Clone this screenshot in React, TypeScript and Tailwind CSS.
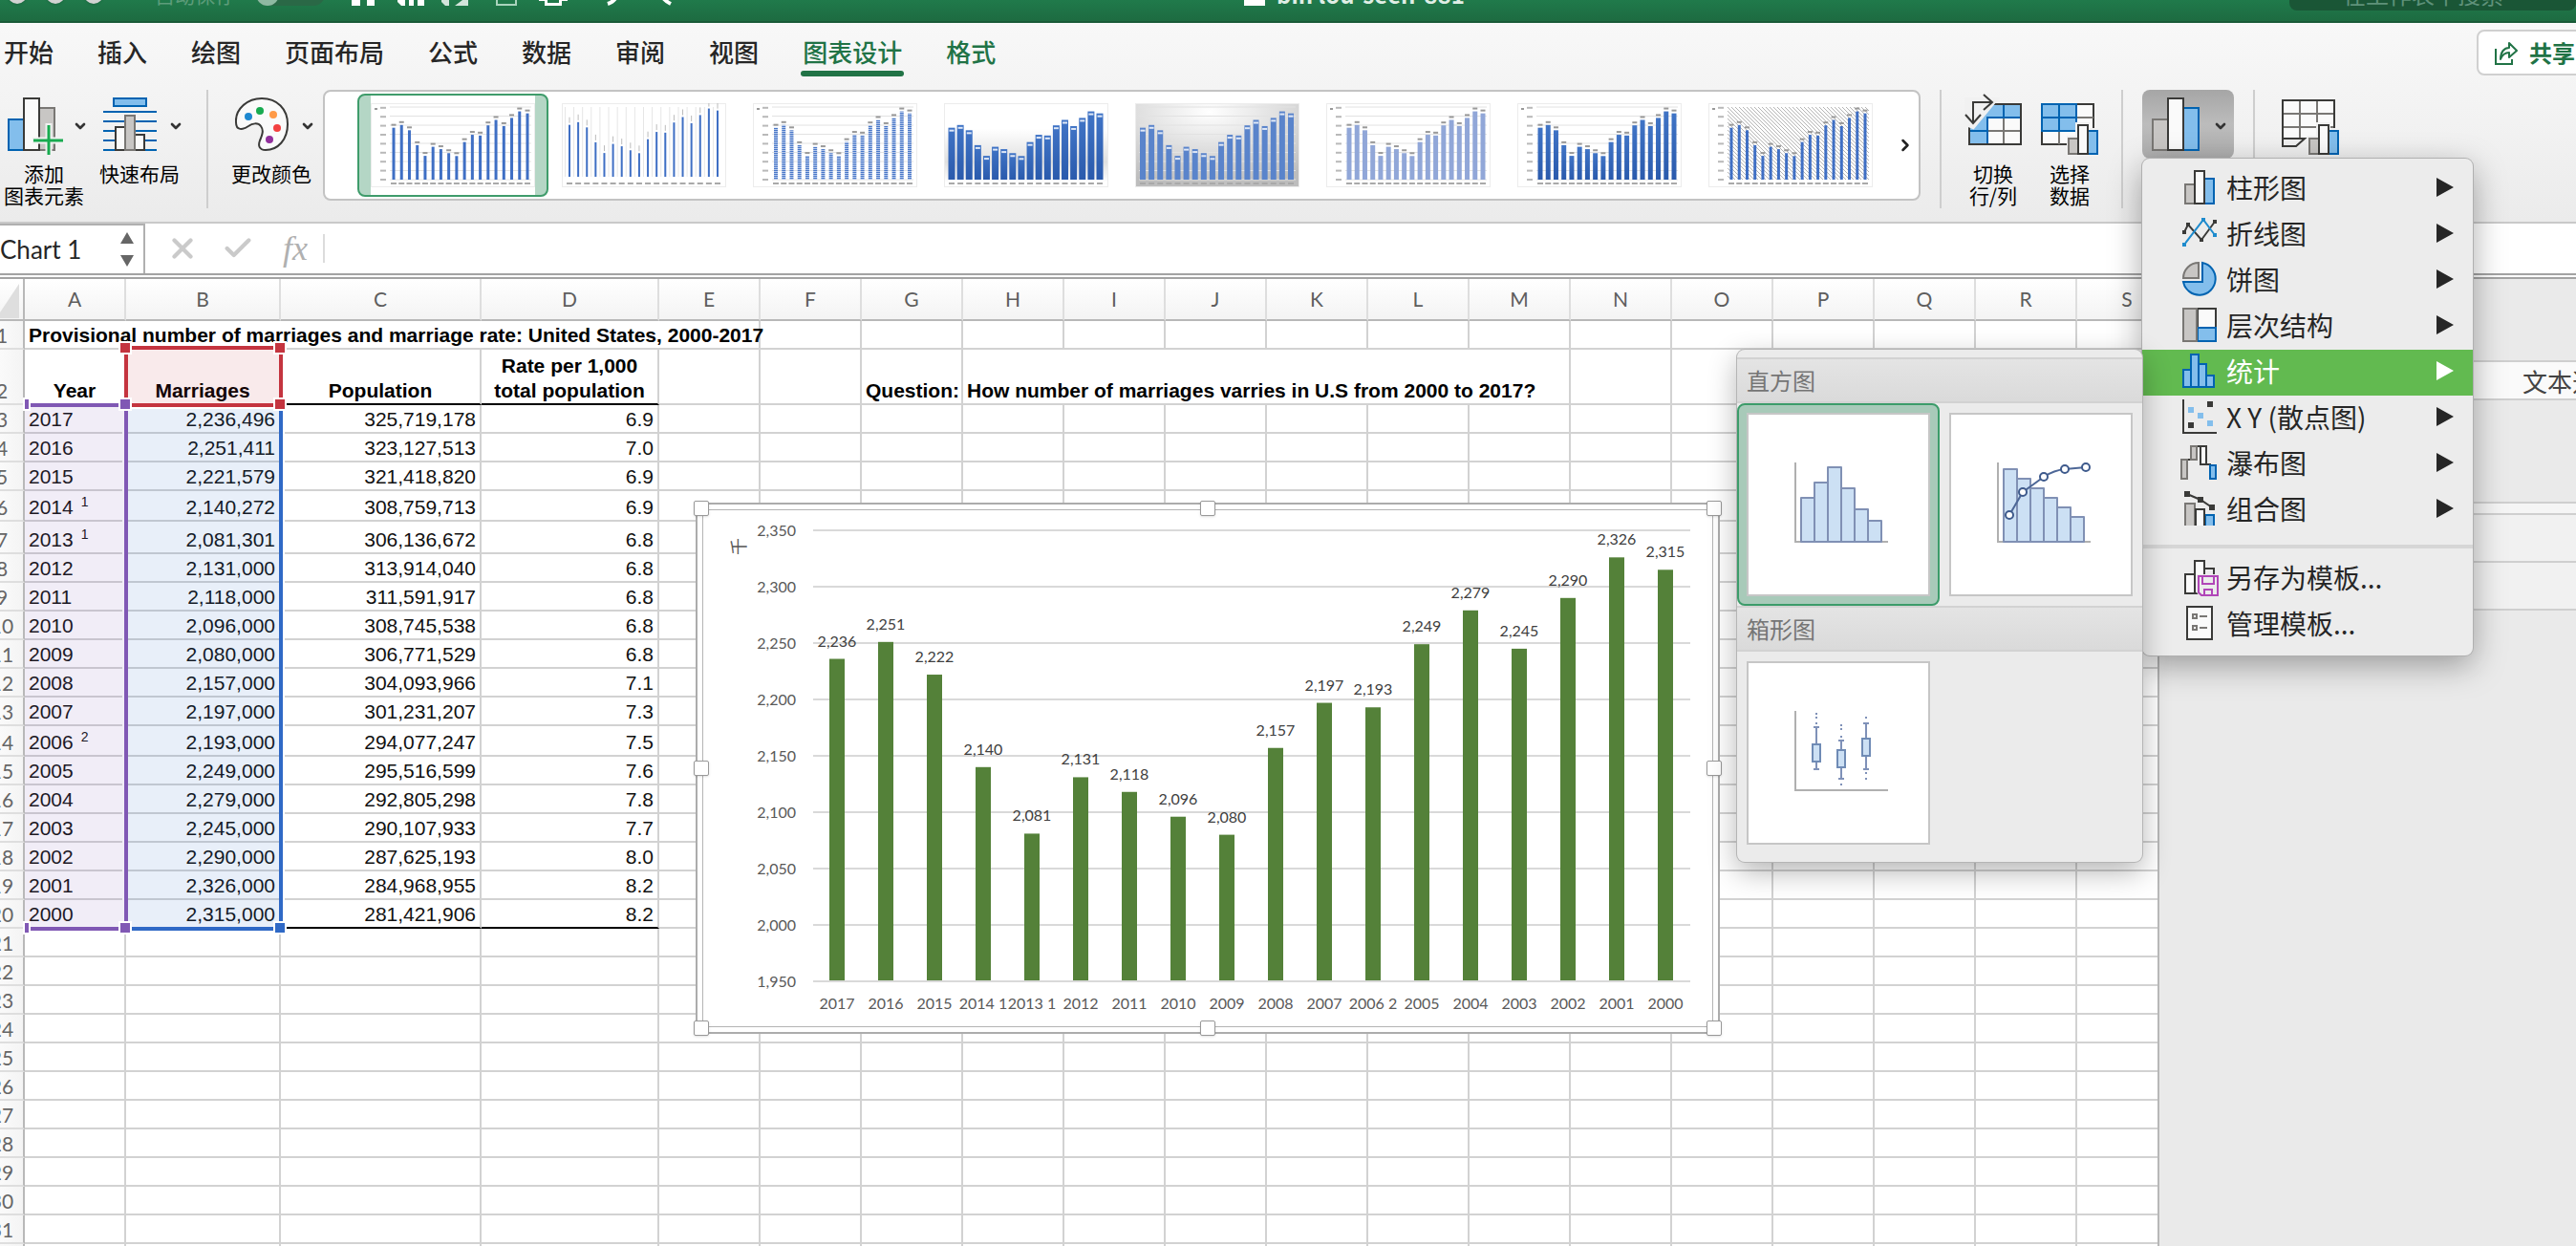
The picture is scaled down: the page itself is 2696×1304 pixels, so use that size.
/**
 * App.tsx
 *
 * Spreadsheet window: ribbon with the chart design tab, worksheet grid,
 * embedded bar chart and the open "change chart type" menu.
 */

import { ReactNode } from "react";
import { Check, ChevronDown, ChevronRight, X } from "lucide-react";

const tabs = ["开始", "插入", "绘图", "页面布局", "公式", "数据", "审阅", "视图", "图表设计", "格式"];

const columns = ["A", "B", "C", "D", "E", "F", "G", "H", "I", "J", "K", "L", "M", "N", "O", "P", "Q", "R", "S"];

interface Row {
  year: string;
  note?: string;
  marriages: number;
  population: string;
  rate: string;
}

const rows: Row[] = [
  { year: "2017", marriages: 2236496, population: "325,719,178", rate: "6.9" },
  { year: "2016", marriages: 2251411, population: "323,127,513", rate: "7.0" },
  { year: "2015", marriages: 2221579, population: "321,418,820", rate: "6.9" },
  { year: "2014", note: "1", marriages: 2140272, population: "308,759,713", rate: "6.9" },
  { year: "2013", note: "1", marriages: 2081301, population: "306,136,672", rate: "6.8" },
  { year: "2012", marriages: 2131000, population: "313,914,040", rate: "6.8" },
  { year: "2011", marriages: 2118000, population: "311,591,917", rate: "6.8" },
  { year: "2010", marriages: 2096000, population: "308,745,538", rate: "6.8" },
  { year: "2009", marriages: 2080000, population: "306,771,529", rate: "6.8" },
  { year: "2008", marriages: 2157000, population: "304,093,966", rate: "7.1" },
  { year: "2007", marriages: 2197000, population: "301,231,207", rate: "7.3" },
  { year: "2006", note: "2", marriages: 2193000, population: "294,077,247", rate: "7.5" },
  { year: "2005", marriages: 2249000, population: "295,516,599", rate: "7.6" },
  { year: "2004", marriages: 2279000, population: "292,805,298", rate: "7.8" },
  { year: "2003", marriages: 2245000, population: "290,107,933", rate: "7.7" },
  { year: "2002", marriages: 2290000, population: "287,625,193", rate: "8.0" },
  { year: "2001", marriages: 2326000, population: "284,968,955", rate: "8.2" },
  { year: "2000", marriages: 2315000, population: "281,421,906", rate: "8.2" },
];

const values = rows.map((r) => Math.round(r.marriages / 1000));

/* ---------- title bar ---------- */

function TitleBar() {
  return (
    <header className="h-6 shrink-0 overflow-hidden border-b-2 border-[#195a37] bg-linear-to-b from-[#207a4b] to-[#1d6b41]">
      <div className="-mt-6 flex h-9 items-center">
        <div className="flex flex-1 items-center">
          <div className="ml-2 flex gap-5">
            <span className="size-5 rounded-full bg-[#d2d2d2] shadow" />
            <span className="size-5 rounded-full bg-[#d2d2d2] shadow" />
            <span className="size-5 rounded-full bg-[#d2d2d2] shadow" />
          </div>
          <span className="ml-[54px] text-[21px] leading-6 text-[#5d9c7a]">自动保存</span>
          <span className="ml-[22px] flex h-6 w-[72px] rounded-full bg-[#2a6846]">
            <span className="size-6 rounded-full bg-[#8fb9a2]" />
          </span>
          <svg className="ml-6 h-6 w-[400px]" viewBox="0 0 400 24" fill="#fff">
            <path d="M4 10 16 0 28 10V24H20V16H13V24H4Z" />
            <path d="M52 0H80V24H56L52 20ZM60 14V24H64V14ZM69 14V24H73V14Z" fillRule="evenodd" />
            <path d="M98 0H126V24H102L98 20ZM106 14V24H112L120 18V14Z" fillRule="evenodd" opacity=".8" />
            <path d="M156 2H176V23H156Z" fill="none" stroke="#a9d3bc" strokeWidth="2" />
            <path d="M200 8H230V19H224V24H206V19H200ZM209 14V21H221V14Z" fillRule="evenodd" />
            <path d="M272 22Q284 18 282 4" fill="none" stroke="#fff" strokeWidth="4" />
            <path d="M326 4Q326 16 338 22" fill="none" stroke="#fff" strokeWidth="4" />
          </svg>
        </div>
        <svg className="mr-3 h-6 w-[22px]" viewBox="0 0 22 24">
          <path d="M0 0H22V24H0Z" fill="#fff" />
        </svg>
        <span className="w-[200px] text-2xl font-bold whitespace-nowrap text-[#dfeee5]">bin lou-seen-881</span>
        <div className="flex w-[1160px] justify-end">
          <div className="flex h-[34px] w-[300px] items-center rounded-lg bg-[#1a5636] pl-14 text-2xl text-[#5f917a]">
            在工作表中搜索
          </div>
        </div>
      </div>
    </header>
  );
}

/* ---------- ribbon icons ---------- */

function SmallBars() {
  return (
    <g strokeWidth="2">
      <path d="M27 62V40H36V26H51V32H61V62Z" fill="#f1f1f1" />
      <path d="M29 43H39V59H29Z" fill="#c8c6c4" stroke="#797774" />
      <path d="M49 35H59V59H49Z" fill="#83beec" stroke="#0063b1" />
      <path d="M39 29H49V59H39Z" fill="#fafafa" stroke="#3a3a38" />
    </g>
  );
}

function AddElementIcon() {
  return (
    <svg className="size-[60px] overflow-visible" viewBox="0 0 60 60" strokeWidth="2">
      <path d="M1 23H17V55H1Z" fill="#83beec" stroke="#0063b1" />
      <path d="M33 11H49V55H33Z" fill="#c8c6c4" stroke="#797774" />
      <path d="M17 1H33V55H17Z" fill="#fafafa" stroke="#3a3a38" />
      <path d="M43 27V60M26 45H58" stroke="#f1f1f1" strokeWidth="7" />
      <path d="M43 29V60M27 45H58" stroke="#18ab50" strokeWidth="3" />
    </svg>
  );
}

function QuickLayoutIcon() {
  return (
    <svg className="size-[60px]" viewBox="0 0 60 60" strokeWidth="2">
      <path d="M11 1H45V9H11Z" fill="#83beec" stroke="#0063b1" />
      <path d="M0 15H56M0 25H56M0 35H56M0 45H56M0 55H56" stroke="#0063b1" />
      <path d="M13 31H23V55H13ZM33 39H43V55H33Z" fill="#fafafa" stroke="#3a3a38" />
      <path d="M23 19H33V55H23Z" fill="#c8c6c4" stroke="#797774" />
    </svg>
  );
}

function PaletteIcon() {
  return (
    <svg className="size-[60px]" viewBox="0 0 60 60">
      <path
        d="M1 26C0 12 13 1 28 1C44 1 55 12 55 28C55 44 45 55 32 55C25 55 24 50 26 45C29 38 30 34 27 30C24 26 18 27 14 30C8 34 1 35 1 26Z"
        fill="#fafafa"
        stroke="#3a3a38"
        strokeWidth="2"
      />
      <circle cx="14" cy="20" r="4" fill="#1e88d0" />
      <circle cx="26" cy="14" r="4" fill="#18ab50" />
      <circle cx="40" cy="18" r="4" fill="#ff9a47" />
      <circle cx="44" cy="32" r="4" fill="#f34040" />
      <circle cx="36" cy="44" r="4" fill="#912f9c" />
    </svg>
  );
}

function SwitchIcon() {
  return (
    <svg className="size-[60px] overflow-visible" viewBox="0 0 60 60" strokeWidth="2" fill="none">
      <path d="M5 7H59V49H5Z" fill="#fafafa" stroke="#3a3a38" />
      <path d="M5 7H59V21H24V49H5Z" fill="#83beec" />
      <path d="M41 21V49M24 35H59" stroke="#797774" />
      <path d="M41 7V21M24 49V21H59M5 35H24" stroke="#0063b1" />
      <path d="M5 7H59V49H5Z" stroke="#3a3a38" />
      <path d="M2 2H33L9 31L2 28Z" fill="#f1f1f1" stroke="#f1f1f1" strokeWidth="4" />
      <path d="M9 26V5H28M20 -3 29 5 20 13M1 18 9 27 17 18" stroke="#3a3a38" />
    </svg>
  );
}

function SelectDataIcon() {
  return (
    <svg className="size-[60px] overflow-visible" viewBox="0 0 60 60" strokeWidth="2" fill="none">
      <path d="M1 7H55V49H1Z" fill="#fafafa" stroke="#3a3a38" />
      <path d="M19 35V49M38 21H55" stroke="#797774" />
      <path d="M1 7H37V35H1ZM19 7V35M1 21H37" fill="#83beec" stroke="#0063b1" />
      <SmallBars />
    </svg>
  );
}

function MoveChartIcon() {
  return (
    <svg className="size-[60px] overflow-visible" viewBox="0 0 60 60" strokeWidth="2" fill="none">
      <path d="M1 3H55V43H1Z" fill="#fafafa" />
      <path d="M19 3V43M37 3V43M1 17H55M1 31H55" stroke="#797774" />
      <path d="M55 43V3H1V51H15L24 43H1" stroke="#3a3a38" />
      <SmallBars />
    </svg>
  );
}

function ColumnChartIcon() {
  return (
    <svg className="size-[60px]" viewBox="0 0 60 60" strokeWidth="2">
      <path d="M1 23H17V55H1Z" fill="#c8c6c4" stroke="#797774" />
      <path d="M33 11H49V55H33Z" fill="#83beec" stroke="#0063b1" />
      <path d="M17 1H33V55H17Z" fill="#fafafa" stroke="#3a3a38" />
    </svg>
  );
}

interface RibbonButtonProps {
  icon: ReactNode;
  lines: string[];
  menu?: boolean;
}

function RibbonButton({ icon, lines, menu = false }: RibbonButtonProps) {
  return (
    <button className="flex flex-col items-start pt-2 text-[21px] leading-[23px] text-black">
      <span className={`flex items-center gap-2 ${menu ? "pl-1" : ""}`}>
        {icon}
        {menu && <ChevronDown className="size-4 text-[#333]" strokeWidth={4} />}
      </span>
      <span className={`mt-2 block text-center ${menu ? "w-[84px]" : "w-[60px]"}`}>
        {lines.map((line) => (
          <span key={line} className="block">{line}</span>
        ))}
      </span>
    </button>
  );
}

/* ---------- chart style gallery ---------- */

interface ChartStyle {
  bar: string;
  width: number;
  wide?: boolean;
  grid?: "h" | "v" | "none" | "hatch";
  back?: string;
  inside?: boolean;
}

const chartStyles: ChartStyle[] = [
  { bar: "#3f6fc4", width: 3 },
  { bar: "#3f6fc4", width: 2, wide: true, grid: "v" },
  { bar: "url(#stripes)", width: 4 },
  { bar: "url(#deep)", width: 7, wide: true, grid: "none", back: "url(#fade)", inside: true },
  { bar: "#5a84cb", width: 6, wide: true, back: "url(#spot)", inside: true },
  { bar: "#91a7d8", width: 5 },
  { bar: "url(#deep)", width: 5 },
  { bar: "#3f6fc4", width: 3, grid: "hatch" },
];

function StyleThumb({ bar, width, wide = false, grid = "h", back = "#fff", inside = false }: ChartStyle) {
  const start = wide ? 8 : 24;
  const step = wide ? 155 / 17 : 140 / 17;
  const base = wide && grid === "v" ? 77 : 80;
  return (
    <svg className="h-[88px] w-[172px]" viewBox="0 0 172 88">
      <rect x="0.5" y="0.5" width="171" height="87" fill={back} stroke="#ececec" />
      {grid === "hatch" && <rect x="20" y="4" width="148" height="76" fill="url(#hatch)" />}
      {grid === "h" &&
        [0, 1, 2, 3, 4, 5, 6, 7, 8].map((i) => (
          <path key={i} d={`M${wide ? 4 : 20} ${80 - i * 9.5}H168`} stroke="#e2e2e2" />
        ))}
      {!wide &&
        [0, 1, 2, 3, 4, 5, 6, 7, 8].map((i) => (
          <rect key={i} x="10" y={79 - i * 9.4} width="6" height="2" fill="#b9b9b9" />
        ))}
      {!wide && <rect x="4" y="5" width="3" height="2" fill="#999" />}
      {values.map((v, i) => {
        const x = start + i * step;
        const h = ((v - 1950) / 400) * 76;
        return (
          <g key={i}>
            {grid === "v" && <path d={`M${x - step / 2} 4V77`} stroke="#e6e6e6" />}
            <rect x={x - width / 2} y={base - h} width={width} height={h} fill={bar} />
            {grid === "v" ? (
              <rect x={x - 0.5} y={base - h - 8} width="1" height="6" fill="#bbb" />
            ) : (
              <rect x={x - 2.5} y={inside ? base - h + 2 : base - h - 4} width="5" height="2" fill={inside ? "#dfe8f7" : "#999"} />
            )}
            <rect x={x - 3} y="83" width="6" height="2" fill="#a9a9a9" />
          </g>
        );
      })}
    </svg>
  );
}

function ThumbDefs() {
  return (
    <svg className="absolute size-0" aria-hidden="true">
      <defs>
        <pattern id="stripes" width="4" height="2" patternUnits="userSpaceOnUse">
          <rect width="4" height="2" fill="#b4c7ea" />
          <rect width="4" height="1" fill="#4a78c8" />
        </pattern>
        <pattern id="hatch" width="4" height="4" patternUnits="userSpaceOnUse">
          <path d="M0 0L4 4" stroke="#b5b5b5" strokeWidth="1" />
        </pattern>
        <linearGradient id="deep" x1="0" y1="0" x2="0" y2="1">
          <stop offset="0" stopColor="#4074c6" />
          <stop offset="1" stopColor="#2a5aac" />
        </linearGradient>
        <linearGradient id="fade" x1="0" y1="0" x2="0" y2="1">
          <stop offset="0.3" stopColor="#fff" />
          <stop offset="0.7" stopColor="#e0e0e0" />
          <stop offset="0.95" stopColor="#fff" />
        </linearGradient>
        <radialGradient id="spot" cx="0.45" cy="0.1" r="0.9">
          <stop offset="0" stopColor="#fff" />
          <stop offset="1" stopColor="#bdbdbd" />
        </radialGradient>
      </defs>
    </svg>
  );
}

function Gallery() {
  return (
    <div className="flex h-[116px] min-w-0 flex-1 items-center rounded-lg border-2 border-[#c3c3c3] bg-white pl-[34px]">
      <ThumbDefs />
      {chartStyles.map((style, i) => (
        <button
          key={i}
          aria-label={`样式 ${i + 1}`}
          className={`flex h-[108px] w-[200px] shrink-0 items-center justify-center rounded-lg ${
            i === 0 ? "border-2 border-[#3f9c6b] bg-[#b4d6c5]" : ""
          }`}
        >
          <span className="bg-white py-2">
            <StyleThumb {...style} />
          </span>
        </button>
      ))}
      <button aria-label="更多样式" className="mr-1 ml-auto">
        <ChevronRight className="size-5 text-[#222]" strokeWidth={3} />
      </button>
    </div>
  );
}

/* ---------- chart type menu ---------- */

const menuItems: { label: string; icon: ReactNode }[] = [
  {
    label: "柱形图",
    icon: (
      <>
        <path d="M3 15H13V35H3Z" fill="#c8c6c4" stroke="#797774" />
        <path d="M23 9H33V35H23Z" fill="#83beec" stroke="#0063b1" />
        <path d="M13 1H23V35H13Z" fill="#fafafa" stroke="#3a3a38" />
      </>
    ),
  },
  {
    label: "折线图",
    icon: (
      <>
        <path d="M2 17 6 9 20 25 34 6" fill="none" stroke="#3a3a38" />
        <path d="M2 30 22 4 34 20" fill="none" stroke="#1e8bcd" />
        <path d="M0 15H4V19H0ZM4 7H8V11H4ZM18 23H22V27H18ZM32 4H36V8H32Z" fill="#3a3a38" />
        <path d="M0 28H4V32H0ZM20 2H24V6H20ZM32 18H36V22H32Z" fill="#1e8bcd" />
      </>
    ),
  },
  {
    label: "饼图",
    icon: (
      <>
        <path d="M21 1A17 17 0 1 1 1 21H21Z" fill="#83beec" stroke="#0063b1" />
        <path d="M17 1V17H1A16 16 0 0 1 17 1Z" fill="#c8c6c4" stroke="#797774" />
      </>
    ),
  },
  {
    label: "层次结构",
    icon: (
      <>
        <path d="M16 1H35V21H16Z" fill="#fafafa" stroke="#3a3a38" />
        <path d="M16 21H35V35H16Z" fill="#83beec" stroke="#0063b1" />
        <path d="M1 1H15V35H1Z" fill="#c8c6c4" stroke="#797774" />
      </>
    ),
  },
  {
    label: "统计",
    icon: <path d="M1 17H9V35H1ZM9 1H17V35H9ZM17 11H25V35H17ZM25 23H33V35H25Z" fill="#83beec" stroke="#0063b1" />,
  },
  {
    label: "X Y (散点图)",
    icon: (
      <>
        <path d="M1 0V35H36" fill="none" stroke="#3a3a38" />
        <path d="M6 8H12V14H6ZM16 14H22V20H16ZM26 22H32V28H26Z" fill="#83beec" />
        <path d="M26 2H32V8H26ZM6 24H12V30H6Z" fill="#3a3a38" />
      </>
    ),
  },
  {
    label: "瀑布图",
    icon: (
      <>
        <path d="M5 15H10M15 1H19M25 20H30" stroke="#3a3a38" />
        <path d="M-1 15H5V35H-1ZM9 1H15V15H9Z" fill="#c8c6c4" stroke="#797774" />
        <path d="M19 1H25V20H19Z" fill="#fafafa" stroke="#3a3a38" />
        <path d="M29 21H35V35H29Z" fill="#83beec" stroke="#0063b1" />
      </>
    ),
  },
  {
    label: "组合图",
    icon: (
      <>
        <path d="M3 36V13H13V36" fill="#c8c6c4" stroke="#797774" />
        <path d="M24 36V25H33V36" fill="#83beec" stroke="#0063b1" />
        <path d="M14 36V19H23V36" fill="#fafafa" stroke="#3a3a38" />
        <path d="M5 3 19 9 31 17" fill="none" stroke="#3a3a38" />
        <path d="M2 0H8V6H2ZM16 6H22V12H16ZM28 14H34V20H28Z" fill="#3a3a38" />
      </>
    ),
  },
];

const templateItems: { label: string; icon: ReactNode }[] = [
  {
    label: "另存为模板...",
    icon: (
      <>
        <path d="M3 15H13V35H3ZM13 1H23V35H13Z" fill="#fafafa" stroke="#3a3a38" />
        <path d="M23 9H33V15" fill="none" stroke="#3a3a38" />
        <path d="M15 15H38V38H18L15 34Z" fill="#ececec" />
        <path d="M17 17H37V37H20L17 34ZM21 17V25H33V17M23 37V31H31V37" fill="none" stroke="#b146b8" />
      </>
    ),
  },
  {
    label: "管理模板...",
    icon: (
      <>
        <path d="M5 1H31V35H5Z" fill="#fafafa" stroke="#3a3a38" />
        <path d="M11 9H15V13H11ZM11 21H15V25H11Z" fill="none" stroke="#797774" />
        <path d="M18 11H26M18 23H26" stroke="#797774" />
      </>
    ),
  },
];

interface MenuItemProps {
  label: string;
  icon: ReactNode;
  active?: boolean;
  arrow?: boolean;
}

function MenuItem({ label, icon, active = false, arrow = false }: MenuItemProps) {
  return (
    <button
      role="menuitem"
      className={`flex h-12 w-full items-center pr-5 pb-1 pl-[42px] text-[28px] whitespace-nowrap ${
        active ? "bg-[#62ba50] text-white" : "text-[#262626]"
      }`}
    >
      <svg className="mr-[10px] size-9 shrink-0 overflow-visible" viewBox="0 0 36 36" strokeWidth="2">
        {icon}
      </svg>
      {label}
      {arrow && (
        <svg className="ml-auto h-5 w-[18px]" viewBox="0 0 18 20" fill="currentColor">
          <path d="M0 0 18 10 0 20Z" />
        </svg>
      )}
    </button>
  );
}

function SectionTitle({ children }: { children: ReactNode }) {
  return (
    <h3 className="flex h-12 items-center border-y-2 border-[#d2d2d2] bg-linear-to-b from-[#e4e4e4] to-[#dadada] pl-[10px] text-2xl text-[#757575]">
      {children}
    </h3>
  );
}

function ChartTile({ label, selected = false, children }: { label: string; selected?: boolean; children: ReactNode }) {
  return (
    <button
      aria-label={label}
      className={`flex size-[212px] items-center justify-center rounded-lg ${
        selected ? "border-2 border-[#3c9c6a] bg-[#a8cab9]" : ""
      }`}
    >
      <svg className="size-48 shrink-0 border-2 border-[#c6c6c6] bg-white" viewBox="2 2 188 188" strokeWidth="2" fill="none">
        <path d="M51 52V135H148" stroke="#b0b0b0" />
        {children}
      </svg>
    </button>
  );
}

interface WhiskerProps {
  x: number;
  top: number;
  high: number;
  low: number;
  bottom: number;
  dots: number[];
}

function Whisker({ x, top, high, low, bottom, dots }: WhiskerProps) {
  return (
    <g stroke="#7f91b8">
      <path d={`M${x - 3} ${top}H${x + 3}M${x} ${top}V${bottom}M${x - 3} ${bottom}H${x + 3}`} />
      <path d={`M${x - 4} ${high}H${x + 4}V${low}H${x - 4}Z`} fill="#cce0f4" stroke="#6f8bb5" />
      {dots.map((y) => (
        <path key={y} d={`M${x - 1} ${y}H${x + 1}`} />
      ))}
    </g>
  );
}

const paretoPoints = [[63, 107], [77, 83], [99, 67], [121, 59], [143, 57]];

/* Opens to the left of the menu, level with the active item */
function StatisticsSubmenu() {
  return (
    <div
      role="menu"
      className="absolute top-[200px] right-full w-[424px] overflow-hidden rounded-lg bg-[#ebebeb] py-2 shadow-[0_10px_30px_rgba(0,0,0,0.3)] ring-1 ring-[#b5b5b5]"
    >
      <SectionTitle>直方图</SectionTitle>
      <div className="flex">
        <ChartTile label="直方图" selected>
          <path
            d="M57 89H71V135H57ZM71 73H85V135H71ZM85 57H99V135H85ZM99 79H113V135H99ZM113 101H127V135H113ZM127 113H141V135H127Z"
            fill="#cce0f4"
            stroke="#8090b4"
            strokeLinejoin="round"
          />
        </ChartTile>
        <ChartTile label="排列图">
          <path
            d="M57 59H71V135H57ZM71 69H85V135H71ZM85 79H99V135H85ZM99 89H113V135H99ZM113 99H127V135H113ZM127 109H141V135H127Z"
            fill="#cce0f4"
            stroke="#8090b4"
            strokeLinejoin="round"
          />
          <path d="M63 107 77 83 99 67Q110 60 121 59L143 57" stroke="#4d6797" />
          {paretoPoints.map(([x, y]) => (
            <circle key={x} cx={x} cy={y} r="4" fill="#fff" stroke="#3e5a8c" />
          ))}
        </ChartTile>
      </div>
      <SectionTitle>箱形图</SectionTitle>
      <ChartTile label="箱形图">
        <Whisker x={73} top={69} high={87} low={105} bottom={113} dots={[55, 59, 65]} />
        <Whisker x={99} top={83} high={93} low={111} bottom={123} dots={[67, 71, 79, 129]} />
        <Whisker x={125} top={65} high={81} low={99} bottom={113} dots={[59, 117, 123]} />
      </ChartTile>
    </div>
  );
}

function ChartTypeMenu() {
  return (
    <div className="relative z-20 self-start">
      <button
        aria-label="更改图表类型"
        className="flex h-[72px] w-24 items-start rounded-lg bg-linear-to-b from-[#a6a6a6] via-[#bcbcbc] to-[#adadad] pt-2 pl-[10px]"
      >
        <ColumnChartIcon />
        <ChevronDown className="mt-[22px] ml-1 size-4 shrink-0 text-[#333]" strokeWidth={4} />
      </button>
      <div
        role="menu"
        className="absolute top-full left-0 w-[346px] rounded-lg bg-[#ececec] py-2 shadow-[0_10px_34px_rgba(0,0,0,0.35)] ring-1 ring-[#b0b0b0]"
      >
        {menuItems.map((item) => (
          <MenuItem key={item.label} {...item} arrow active={item.label === "统计"} />
        ))}
        <div className="mt-3 mb-2 h-1 bg-[#d6d6d6]" />
        {templateItems.map((item) => (
          <MenuItem key={item.label} {...item} />
        ))}
        <StatisticsSubmenu />
      </div>
    </div>
  );
}

function Divider() {
  return <span className="h-[124px] w-[2px] shrink-0 bg-[#cecece]" />;
}

function Ribbon() {
  return (
    <div className="shrink-0 border-b-2 border-[#c9c9c9] bg-linear-to-b from-[#f8f8f8] via-[#f2f2f2] to-[#ebebeb]">
      <nav className="flex h-[62px] items-center">
        <div className="flex h-full flex-1 gap-[46px] pl-1">
          {tabs.map((tab) => (
            <button
              key={tab}
              className={`relative pb-[3px] text-[26px] font-medium whitespace-nowrap ${
                tab === "图表设计" || tab === "格式" ? "text-[#217346]" : "text-[#262626]"
              }`}
            >
              {tab}
              {tab === "图表设计" && (
                <span className="absolute -inset-x-[2px] bottom-[6px] h-[6px] rounded-full bg-[#217346]" />
              )}
            </button>
          ))}
        </div>
        <button className="-mr-2 flex h-12 w-28 items-center gap-3 rounded-lg border-2 border-[#d0d0d0] bg-white pl-4 text-2xl font-bold whitespace-nowrap text-[#217346]">
          <svg className="size-[25px] shrink-0" viewBox="0 0 25 25" fill="none" stroke="#217346" strokeWidth="2">
            <path d="M2 8V24H19V19" />
            <path d="M7 19C7 11 11 7 16 7V2L24 10 16 17V12C12 12 9 14 7 19Z" strokeLinejoin="round" />
          </svg>
          共享
        </button>
      </nav>
      <div className="flex h-[146px] items-start pt-2 pl-1">
        <div className="flex gap-[12px]">
          <RibbonButton icon={<AddElementIcon />} lines={["添加", "图表元素"]} menu />
          <RibbonButton icon={<QuickLayoutIcon />} lines={["快速布局"]} menu />
        </div>
        <span className="w-6 shrink-0" />
        <Divider />
        <span className="w-6 shrink-0" />
        <RibbonButton icon={<PaletteIcon />} lines={["更改颜色"]} menu />
        <span className="w-2 shrink-0" />
        <Gallery />
        <div className="flex w-[686px] shrink-0 pl-5">
          <Divider />
          <div className="flex w-[188px] gap-5 pl-6">
            <RibbonButton icon={<SwitchIcon />} lines={["切换", "行/列"]} />
            <RibbonButton icon={<SelectDataIcon />} lines={["选择", "数据"]} />
          </div>
          <Divider />
          <span className="w-5 shrink-0" />
          <ChartTypeMenu />
          <span className="w-5 shrink-0" />
          <Divider />
          <button aria-label="移动图表" className="ml-[28px] self-start pt-2">
            <MoveChartIcon />
          </button>
        </div>
      </div>
    </div>
  );
}

/* ---------- formula bar ---------- */

function FormulaBar() {
  return (
    <div className="flex h-[58px] shrink-0 items-start border-b-2 border-[#a3a3a3] bg-[#fdfdfd]">
      <div className="flex h-[54px] w-full items-center border-b-2 border-[#a3a3a3] bg-white">
        <div className="flex h-full w-[152px] items-center justify-between border-t-2 border-r-2 border-[#b0b0b0] pr-[10px]">
          <input
            aria-label="名称框"
            defaultValue="Chart 1"
            className="w-[110px] bg-transparent font-[Lato,'Noto_Sans_CJK_SC',sans-serif] text-[26px] text-[#262626]"
          />
          <svg className="h-9 w-[14px]" viewBox="0 0 14 36" fill="#666">
            <path d="M7 0 14 12H0ZM7 36 0 24H14Z" />
          </svg>
        </div>
        <button aria-label="取消" className="ml-[22px]">
          <X className="size-[34px] text-[#cacaca]" strokeWidth={3} />
        </button>
        <button aria-label="输入" className="ml-6">
          <Check className="size-[34px] text-[#cacaca]" strokeWidth={3} />
        </button>
        <button
          aria-label="插入函数"
          className="ml-[30px] font-['Liberation_Serif',serif] text-4xl leading-9 text-[#b0b0b0] italic"
        >
          fx
        </button>
        <span className="ml-4 h-[30px] w-[2px] bg-[#dcdcdc]" />
        <input aria-label="编辑栏" className="h-full min-w-0 flex-1 bg-transparent px-3 text-2xl" />
      </div>
    </div>
  );
}

/* ---------- worksheet ---------- */

const rowHeight = (n: number) => {
  if (n === 6 || n === 14) return "h-8";
  if (n === 7) return "h-[34px]";
  return "h-[30px]";
};

function EmptyCells({ count }: { count: number }) {
  return (
    <>
      {Array.from({ length: count }, (_, i) => (
        <td key={i} className="border-r-2 border-b-2 border-[#d2d2d2]" />
      ))}
    </>
  );
}

function RowHeader({ n }: { n: number }) {
  return (
    <th
      scope="row"
      className="border-r-2 border-b-2 border-r-[#b8b8b8] border-b-[#dedede] bg-linear-to-r from-white to-[#f4f4f4] p-0 text-center align-bottom font-[Lato,sans-serif] text-[21px] font-normal text-[#666]"
    >
      {n}
    </th>
  );
}

function SheetTable() {
  return (
    <table className="-ml-5 w-[2300px] table-fixed border-separate border-spacing-0 font-['Liberation_Sans',Arial,sans-serif] text-[21px] leading-[26px] text-[#111]">
      <colgroup>
        <col className="w-[46px]" />
        <col className="w-[106px]" />
        <col className="w-[162px]" />
        <col className="w-[210px]" />
        <col className="w-[186px]" />
        {columns.slice(4).map((c) => (
          <col key={c} className="w-[106px]" />
        ))}
      </colgroup>
      <thead>
        <tr className="h-11 bg-linear-to-b from-white to-[#f3f3f3]">
          <th aria-label="全选" className="border-r-2 border-b-2 border-[#b8b8b8] p-0">
            <svg className="mt-1 mr-1 ml-auto h-9 w-9" viewBox="0 0 36 36">
              <path d="M36 0V36H12Z" fill="#dedede" />
            </svg>
          </th>
          {columns.map((c) => (
            <th
              key={c}
              scope="col"
              className="border-r-2 border-b-2 border-r-[#dedede] border-b-[#b8b8b8] p-0 font-[Lato,sans-serif] text-[21px] font-normal text-[#5e5e5e]"
            >
              {c}
            </th>
          ))}
        </tr>
      </thead>
      <tbody className="whitespace-nowrap [&_td]:px-1 [&_td]:py-0 [&_td]:align-bottom">
        <tr className="h-[30px] font-bold text-black">
          <RowHeader n={1} />
          <td colSpan={5} className="border-r-2 border-b-2 border-[#d2d2d2]">
            Provisional number of marriages and marriage rate: United States, 2000-2017
          </td>
          <EmptyCells count={14} />
        </tr>
        <tr className="h-[58px] font-bold text-black">
          <RowHeader n={2} />
          <td className="border-r-2 border-b-2 border-[#d2d2d2] text-center">Year</td>
          <td className="border-r-2 border-b-2 border-[#d2d2d2] text-center">Marriages</td>
          <td className="border-r-2 border-b-2 border-r-[#d2d2d2] border-b-black text-center">Population</td>
          <td className="border-r-2 border-b-2 border-r-[#d2d2d2] border-b-black text-center">
            Rate per 1,000
            <br />
            total population
          </td>
          <EmptyCells count={2} />
          <td className="border-r-2 border-b-2 border-[#d2d2d2]">Question:</td>
          <td colSpan={6} className="border-r-2 border-b-2 border-[#d2d2d2]">
            How number of marriages varries in U.S from 2000 to 2017?
          </td>
          <EmptyCells count={6} />
        </tr>
        {rows.map((row, i) => {
          const last = i === rows.length - 1;
          const under = last ? "border-b-black" : "border-b-[#d2d2d2]";
          return (
            <tr key={row.year} className={rowHeight(i + 3)}>
              <RowHeader n={i + 3} />
              <td className="border-r-2 border-b-2 border-[#d2d2d2]">
                {row.year}
                {row.note && <span className="relative -top-2 ml-2 text-sm leading-none">{row.note}</span>}
              </td>
              <td className="border-r-2 border-b-2 border-[#d2d2d2] text-right">{row.marriages.toLocaleString("en-US")}</td>
              <td className={`border-r-2 border-b-2 border-r-[#d2d2d2] text-right ${under}`}>{row.population}</td>
              <td className={`border-r-2 border-b-2 border-r-[#d2d2d2] text-right ${under}`}>{row.rate}</td>
              <EmptyCells count={15} />
            </tr>
          );
        })}
        {Array.from({ length: 13 }, (_, i) => (
          <tr key={i} className="h-[30px]">
            <RowHeader n={i + 21} />
            <EmptyCells count={19} />
          </tr>
        ))}
      </tbody>
    </table>
  );
}

/* Coloured outlines round the ranges that feed the chart */
function RangeMarks() {
  return (
    <div className="pointer-events-none">
      <div className="absolute top-[130px] left-[130px] h-[552px] w-[166px] border-4 border-[#2f69c6] bg-[#2f69c6]/11 ring-2 ring-white" />
      <div className="absolute top-[130px] left-[26px] h-[552px] w-[108px] border-4 border-l-0 border-[#8058b4] bg-[#8058b4]/11" />
      <div className="absolute top-[70px] left-[130px] h-16 w-[166px] border-4 border-[#c4343f] bg-[#c4343f]/10 ring-2 ring-white" />
      <span className="absolute top-[67px] left-[126px] size-[10px] bg-[#c4343f] ring-2 ring-white" />
      <span className="absolute top-[67px] left-[288px] size-[10px] bg-[#c4343f] ring-2 ring-white" />
      <span className="absolute top-[126px] left-[288px] size-[10px] bg-[#c4343f] ring-2 ring-white" />
      <span className="absolute top-[126px] left-[126px] size-[10px] bg-[#8058b4] ring-2 ring-white" />
      <span className="absolute top-[126px] left-[26px] h-[10px] w-1 bg-[#8058b4] ring-2 ring-white" />
      <span className="absolute top-[674px] left-[26px] h-[10px] w-1 bg-[#8058b4] ring-2 ring-white" />
      <span className="absolute top-[674px] left-[126px] size-[10px] bg-[#8058b4] ring-2 ring-white" />
      <span className="absolute top-[674px] left-[288px] size-[10px] bg-[#2f69c6] ring-2 ring-white" />
    </div>
  );
}

const ticks = [2350, 2300, 2250, 2200, 2150, 2100, 2050, 2000, 1950];

function BarChart() {
  const y = (v: number) => 493 - ((v - 1950) / 50) * 59;
  return (
    <svg
      className="h-full w-full font-[Lato,'Noto_Sans_CJK_SC',sans-serif] text-base"
      viewBox="0 0 1056 540"
      role="img"
      aria-label="Marriages by year"
    >
      {ticks.map((t) => (
        <g key={t}>
          <path d={`M115 ${y(t)}H1033`} stroke="#d9d9d9" strokeWidth="2" />
          <text x="97" y={y(t) + 6} textAnchor="end" fill="#595959">
            {t.toLocaleString("en-US")}
          </text>
        </g>
      ))}
      <text x="0" y="0" transform="translate(44 47) rotate(-90)" fill="#595959" className="text-lg">
        千
      </text>
      {rows.map((row, i) => {
        const x = 140 + i * 51;
        const v = values[i];
        return (
          <g key={row.year} textAnchor="middle">
            <rect x={x - 8} y={y(v)} width="16" height={492 - y(v)} fill="#548139" />
            <text x={x} y={y(v) - 13} fill="#404040">
              {v.toLocaleString("en-US")}
            </text>
            <text x={x} y="522" fill="#595959">
              {row.note ? `${row.year} ${row.note}` : row.year}
            </text>
          </g>
        );
      })}
    </svg>
  );
}

const handles = [
  "-top-1 -left-1",
  "-top-1 left-1/2 -ml-2",
  "-top-1 -right-1",
  "top-1/2 -left-1 -mt-2",
  "top-1/2 -right-1 -mt-2",
  "-bottom-1 -left-1",
  "-bottom-1 left-1/2 -ml-2",
  "-bottom-1 -right-1",
];

function ChartObject() {
  return (
    <div className="absolute top-[234px] left-[728px] h-[556px] w-[1072px] border-2 border-[#acacac] bg-white p-[6px]">
      <div className="h-full w-full outline-1 outline-[#b4b4b4]">
        <BarChart />
      </div>
      {handles.map((place) => (
        <span key={place} className={`absolute size-4 rounded-xs border border-[#999] bg-white shadow ${place}`} />
      ))}
    </div>
  );
}

/* Format pane that the menu partly covers */
function FormatPane() {
  return (
    <aside className="w-[438px] shrink-0 border-l-2 border-[#b8b8b8] bg-[#eaeaea] pt-[85px]">
      <div className="flex h-[42px] items-center justify-end overflow-hidden border-y-2 border-[#cfcfcf] bg-[#fafafa]">
        <button className="w-14 text-[26px] whitespace-nowrap text-[#444]">文本选项</button>
      </div>
      <div className="mt-[106px] h-[14px] border-y-2 border-[#cfcfcf] bg-[#f5f5f5]" />
      <div className="h-[50px] border-b-2 border-[#cfcfcf] bg-[#f1f1f1]" />
      <div className="h-[50px] border-b-2 border-[#cfcfcf] bg-[#f1f1f1]" />
    </aside>
  );
}

export default function App() {
  return (
    <div className="flex h-screen flex-col overflow-hidden bg-white font-['Noto_Sans_CJK_SC',sans-serif]">
      <TitleBar />
      <Ribbon />
      <FormulaBar />
      <main className="flex min-h-0 flex-1">
        <div className="relative min-w-0 flex-1 overflow-hidden">
          <SheetTable />
          <RangeMarks />
          <ChartObject />
        </div>
        <FormatPane />
      </main>
    </div>
  );
}
